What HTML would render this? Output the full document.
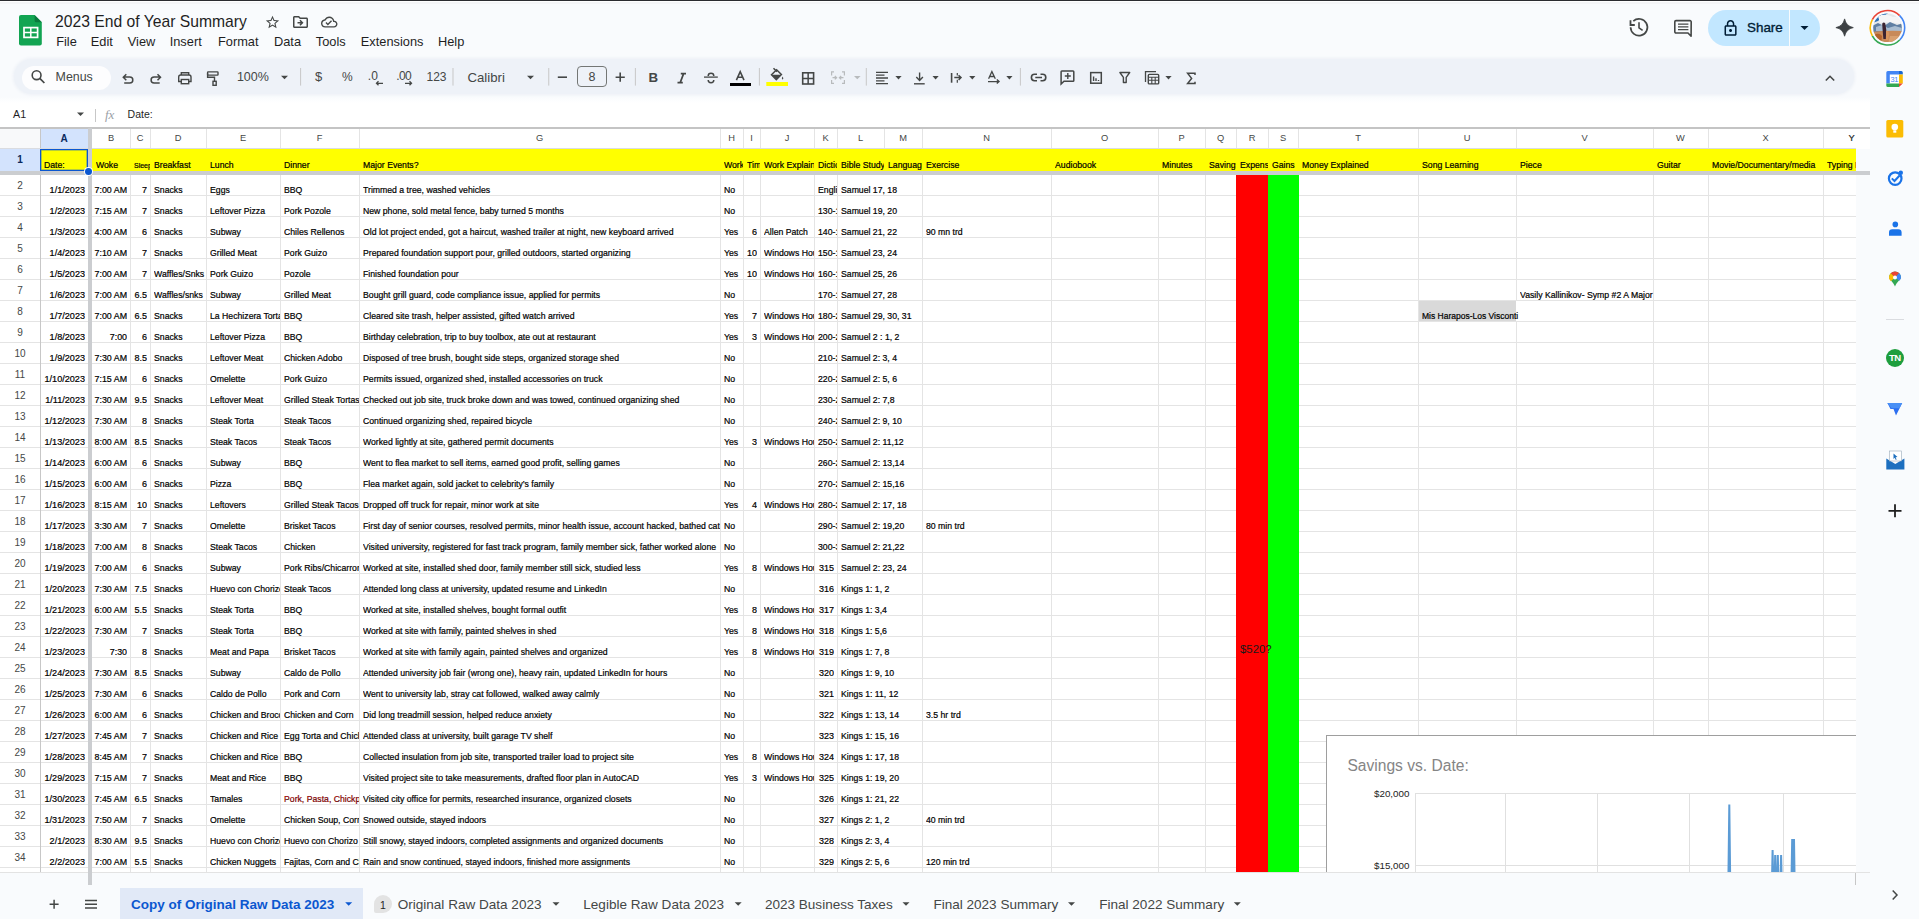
<!DOCTYPE html><html><head><meta charset="utf-8"><style>
*{box-sizing:border-box;margin:0;padding:0}
html,body{width:1919px;height:919px;overflow:hidden;background:#f9fbfd;font-family:"Liberation Sans",sans-serif;color:#1f1f1f}
.a{position:absolute}
.t{position:absolute;white-space:nowrap;overflow:hidden;font-size:8.7px;line-height:11px;color:#000;-webkit-text-stroke:0.2px #000}
.gl{position:absolute;background:#e4e4e4}
.ch{position:absolute;top:128px;height:21px;font-size:9.3px;line-height:21px;text-align:center;color:#444746}
.rh{position:absolute;left:0;width:40px;font-size:10px;text-align:center;color:#444746}
svg{position:absolute;overflow:visible}
</style></head><body>
<div class="a" style="left:0.0px;top:0.0px;width:1919.0px;height:1.0px;background:#2b2c30"></div>
<div class="a" style="left:0.0px;top:1.0px;width:1919.0px;height:1.0px;background:#ffffff"></div>
<div class="a" style="left:0.0px;top:2.0px;width:1919.0px;height:2.0px;background:#f4f5f7"></div>
<div class="a" style="left:55.0px;top:12.73px;font-size:15.70px;line-height:18.05px;color:#1f1f1f;font-weight:normal;white-space:nowrap;">2023 End of Year Summary</div>
<div class="a" style="left:56.2px;top:34.60px;font-size:12.80px;line-height:14.72px;color:#1f1f1f;font-weight:normal;white-space:nowrap;">File</div>
<div class="a" style="left:90.8px;top:34.60px;font-size:12.80px;line-height:14.72px;color:#1f1f1f;font-weight:normal;white-space:nowrap;">Edit</div>
<div class="a" style="left:127.8px;top:34.60px;font-size:12.80px;line-height:14.72px;color:#1f1f1f;font-weight:normal;white-space:nowrap;">View</div>
<div class="a" style="left:169.7px;top:34.60px;font-size:12.80px;line-height:14.72px;color:#1f1f1f;font-weight:normal;white-space:nowrap;">Insert</div>
<div class="a" style="left:218.0px;top:34.60px;font-size:12.80px;line-height:14.72px;color:#1f1f1f;font-weight:normal;white-space:nowrap;">Format</div>
<div class="a" style="left:274.0px;top:34.60px;font-size:12.80px;line-height:14.72px;color:#1f1f1f;font-weight:normal;white-space:nowrap;">Data</div>
<div class="a" style="left:315.8px;top:34.60px;font-size:12.80px;line-height:14.72px;color:#1f1f1f;font-weight:normal;white-space:nowrap;">Tools</div>
<div class="a" style="left:360.8px;top:34.60px;font-size:12.80px;line-height:14.72px;color:#1f1f1f;font-weight:normal;white-space:nowrap;">Extensions</div>
<div class="a" style="left:438.0px;top:34.60px;font-size:12.80px;line-height:14.72px;color:#1f1f1f;font-weight:normal;white-space:nowrap;">Help</div>
<div class="a" style="left:14.0px;top:59.0px;width:1840.0px;height:35.0px;border-radius:17.5px;background:#eef2f8;box-shadow:0 0 2.5px 1.5px #f0f3f8"></div>
<div class="a" style="left:22.0px;top:65.5px;width:89.0px;height:24.0px;border-radius:12px;background:#fdfdfe"></div>
<div class="a" style="left:55.6px;top:69.57px;font-size:12.40px;line-height:14.26px;color:#444746;font-weight:normal;white-space:nowrap;">Menus</div>
<div class="a" style="left:236.9px;top:70.38px;font-size:12.50px;line-height:14.37px;color:#444746;font-weight:normal;white-space:nowrap;">100%</div>
<div class="a" style="left:467.5px;top:69.74px;font-size:13.20px;line-height:15.18px;color:#444746;font-weight:normal;white-space:nowrap;">Calibri</div>
<div class="a" style="left:577.0px;top:66.0px;width:29.5px;height:21.0px;box-sizing:border-box;border:1px solid #747775;border-radius:4px"></div>
<div class="a" style="left:588.5px;top:69.98px;font-size:12.50px;line-height:14.37px;color:#444746;font-weight:normal;white-space:nowrap;">8</div>
<div class="a" style="left:315.0px;top:69.92px;font-size:13.00px;line-height:14.95px;color:#444746;font-weight:normal;white-space:nowrap;">$</div>
<div class="a" style="left:342.0px;top:70.84px;font-size:12.00px;line-height:13.80px;color:#444746;font-weight:normal;white-space:nowrap;">%</div>
<div class="a" style="left:426.5px;top:70.84px;font-size:12.00px;line-height:13.80px;color:#444746;font-weight:normal;white-space:nowrap;">123</div>
<div class="a" style="left:648.5px;top:70.34px;font-size:13.30px;line-height:15.29px;color:#444746;font-weight:bold;white-space:nowrap;">B</div>
<div class="a" style="left:0.0px;top:97.0px;width:1870.0px;height:31.0px;background:linear-gradient(#f9fbfd 0px,#fdfeff 4px,#ffffff 6px)"></div>
<div class="a" style="left:13.0px;top:107.84px;font-size:10.70px;line-height:12.30px;color:#1f1f1f;font-weight:normal;white-space:nowrap;">A1</div>
<div class="a" style="left:127.6px;top:108.02px;font-size:10.50px;line-height:12.07px;color:#1f1f1f;font-weight:normal;white-space:nowrap;">Date:</div>
<div class="a" style="left:95.0px;top:108.5px;width:1.0px;height:13.0px;background:#c7c7c7"></div>
<div class="a" style="left:1707.7px;top:9.7px;width:112.0px;height:36.0px;border-radius:18px;background:#c2e7ff"></div>
<div class="a" style="left:1789.0px;top:9.7px;width:1.0px;height:36.0px;background:#f9fbfd"></div>
<div class="a" style="left:1747.0px;top:20.35px;font-size:13.40px;line-height:15.41px;color:#001d35;font-weight:normal;white-space:nowrap;-webkit-text-stroke:0.35px #001d35">Share</div>
<div class="a" style="left:0;top:0;width:1856px;height:872px;overflow:hidden">
<div class="a" style="left:0;top:128px;width:1856px;height:744px;background:#fff"></div>
<div class="a" style="left:0;top:128px;width:1870px;height:21px;background:#fff"></div>
<div class="a" style="left:0;top:128px;width:40px;height:21px;background:#f8f9fa"></div>
<div class="a" style="left:0;top:149px;width:40px;height:723px;background:#fff"></div>
<div class="a" style="left:40px;top:149px;width:1816px;height:21px;background:#ffff00"></div>
<div class="a" style="left:40px;top:128px;width:48px;height:21px;background:#d3e3fd"></div>
<div class="a" style="left:0;top:149px;width:40px;height:22px;background:#d3e3fd"></div>
<div class="a" style="left:1236px;top:175px;width:32px;height:697px;background:#ff0000"></div>
<div class="a" style="left:1268px;top:175px;width:31px;height:697px;background:#00ff00"></div>
<div class="a" style="left:1418px;top:301px;width:98px;height:21px;background:#d9d9d9"></div>
<div class="gl" style="left:0;top:195px;width:1856px;height:1px"></div>
<div class="gl" style="left:0;top:216px;width:1856px;height:1px"></div>
<div class="gl" style="left:0;top:237px;width:1856px;height:1px"></div>
<div class="gl" style="left:0;top:258px;width:1856px;height:1px"></div>
<div class="gl" style="left:0;top:279px;width:1856px;height:1px"></div>
<div class="gl" style="left:0;top:300px;width:1856px;height:1px"></div>
<div class="gl" style="left:0;top:321px;width:1856px;height:1px"></div>
<div class="gl" style="left:0;top:342px;width:1856px;height:1px"></div>
<div class="gl" style="left:0;top:363px;width:1856px;height:1px"></div>
<div class="gl" style="left:0;top:384px;width:1856px;height:1px"></div>
<div class="gl" style="left:0;top:405px;width:1856px;height:1px"></div>
<div class="gl" style="left:0;top:426px;width:1856px;height:1px"></div>
<div class="gl" style="left:0;top:447px;width:1856px;height:1px"></div>
<div class="gl" style="left:0;top:468px;width:1856px;height:1px"></div>
<div class="gl" style="left:0;top:489px;width:1856px;height:1px"></div>
<div class="gl" style="left:0;top:510px;width:1856px;height:1px"></div>
<div class="gl" style="left:0;top:531px;width:1856px;height:1px"></div>
<div class="gl" style="left:0;top:552px;width:1856px;height:1px"></div>
<div class="gl" style="left:0;top:573px;width:1856px;height:1px"></div>
<div class="gl" style="left:0;top:594px;width:1856px;height:1px"></div>
<div class="gl" style="left:0;top:615px;width:1856px;height:1px"></div>
<div class="gl" style="left:0;top:636px;width:1856px;height:1px"></div>
<div class="gl" style="left:0;top:657px;width:1856px;height:1px"></div>
<div class="gl" style="left:0;top:678px;width:1856px;height:1px"></div>
<div class="gl" style="left:0;top:699px;width:1856px;height:1px"></div>
<div class="gl" style="left:0;top:720px;width:1856px;height:1px"></div>
<div class="gl" style="left:0;top:741px;width:1856px;height:1px"></div>
<div class="gl" style="left:0;top:762px;width:1856px;height:1px"></div>
<div class="gl" style="left:0;top:783px;width:1856px;height:1px"></div>
<div class="gl" style="left:0;top:804px;width:1856px;height:1px"></div>
<div class="gl" style="left:0;top:825px;width:1856px;height:1px"></div>
<div class="gl" style="left:0;top:846px;width:1856px;height:1px"></div>
<div class="gl" style="left:0;top:867px;width:1856px;height:1px"></div>
<div class="gl" style="left:88px;top:128px;width:1px;height:744px"></div>
<div class="gl" style="left:130px;top:128px;width:1px;height:744px"></div>
<div class="gl" style="left:150px;top:128px;width:1px;height:744px"></div>
<div class="gl" style="left:206px;top:128px;width:1px;height:744px"></div>
<div class="gl" style="left:280px;top:128px;width:1px;height:744px"></div>
<div class="gl" style="left:359px;top:128px;width:1px;height:744px"></div>
<div class="gl" style="left:720px;top:128px;width:1px;height:744px"></div>
<div class="gl" style="left:743px;top:128px;width:1px;height:744px"></div>
<div class="gl" style="left:760px;top:128px;width:1px;height:744px"></div>
<div class="gl" style="left:814px;top:128px;width:1px;height:744px"></div>
<div class="gl" style="left:837px;top:128px;width:1px;height:744px"></div>
<div class="gl" style="left:884px;top:128px;width:1px;height:47px"></div>
<div class="gl" style="left:922px;top:128px;width:1px;height:744px"></div>
<div class="gl" style="left:1051px;top:128px;width:1px;height:744px"></div>
<div class="gl" style="left:1158px;top:128px;width:1px;height:744px"></div>
<div class="gl" style="left:1205px;top:128px;width:1px;height:744px"></div>
<div class="gl" style="left:1236px;top:128px;width:1px;height:744px"></div>
<div class="gl" style="left:1268px;top:128px;width:1px;height:744px"></div>
<div class="gl" style="left:1298px;top:128px;width:1px;height:744px"></div>
<div class="gl" style="left:1418px;top:128px;width:1px;height:744px"></div>
<div class="gl" style="left:1516px;top:128px;width:1px;height:744px"></div>
<div class="gl" style="left:1653px;top:128px;width:1px;height:744px"></div>
<div class="gl" style="left:1708px;top:128px;width:1px;height:744px"></div>
<div class="gl" style="left:1823px;top:128px;width:1px;height:744px"></div>
<div class="gl" style="left:40px;top:128px;width:1px;height:744px;background:#c7c7c7"></div>
<div class="gl" style="left:0;top:148px;width:1856px;height:1px;background:#dadce0"></div>
<div class="a" style="left:0;top:127px;width:1870px;height:1.5px;background:#c4c4c4"></div>
<div class="a" style="left:41px;top:149px;width:1815px;height:22px;background:#ffff00"></div>
<div class="a" style="left:1236px;top:175px;width:32px;height:697px;background:#ff0000"></div>
<div class="a" style="left:1268px;top:175px;width:31px;height:697px;background:#00ff00"></div>
<div class="a" style="left:40px;top:149px;width:48px;height:22px;box-sizing:border-box;border:1px solid #0b57d0;box-shadow:inset 0 0 0 0.6px rgba(11,87,208,0.6)"></div>
<div class="a" style="left:88px;top:128px;width:4px;height:757px;background:#cbcdd0"></div>
<div class="a" style="left:0;top:171px;width:1870px;height:4px;background:#cbcdd0"></div>
<div class="a" style="left:85px;top:167.5px;width:7px;height:7px;border-radius:50%;background:#0b57d0;box-shadow:0 0 0 1px #fff"></div>
<div class="ch" style="left:40px;width:48px;font-weight:bold;color:#0a2a5e;font-size:10px">A</div>
<div class="ch" style="left:92px;width:38px;">B</div>
<div class="ch" style="left:130px;width:20px;">C</div>
<div class="ch" style="left:150px;width:56px;">D</div>
<div class="ch" style="left:206px;width:74px;">E</div>
<div class="ch" style="left:280px;width:79px;">F</div>
<div class="ch" style="left:359px;width:361px;">G</div>
<div class="ch" style="left:720px;width:23px;">H</div>
<div class="ch" style="left:743px;width:17px;">I</div>
<div class="ch" style="left:760px;width:54px;">J</div>
<div class="ch" style="left:814px;width:23px;">K</div>
<div class="ch" style="left:837px;width:47px;">L</div>
<div class="ch" style="left:884px;width:38px;">M</div>
<div class="ch" style="left:922px;width:129px;">N</div>
<div class="ch" style="left:1051px;width:107px;">O</div>
<div class="ch" style="left:1158px;width:47px;">P</div>
<div class="ch" style="left:1205px;width:31px;">Q</div>
<div class="ch" style="left:1236px;width:32px;">R</div>
<div class="ch" style="left:1268px;width:30px;">S</div>
<div class="ch" style="left:1298px;width:120px;">T</div>
<div class="ch" style="left:1418px;width:98px;">U</div>
<div class="ch" style="left:1516px;width:137px;">V</div>
<div class="ch" style="left:1653px;width:55px;">W</div>
<div class="ch" style="left:1708px;width:115px;">X</div>
<div class="ch" style="left:1823px;width:57px;">Y</div>
<div class="rh" style="top:149px;height:21px;line-height:21px;font-weight:bold;color:#0a2a5e">1</div>
<div class="rh" style="top:175px;height:21px;line-height:21px">2</div>
<div class="rh" style="top:196px;height:21px;line-height:21px">3</div>
<div class="rh" style="top:217px;height:21px;line-height:21px">4</div>
<div class="rh" style="top:238px;height:21px;line-height:21px">5</div>
<div class="rh" style="top:259px;height:21px;line-height:21px">6</div>
<div class="rh" style="top:280px;height:21px;line-height:21px">7</div>
<div class="rh" style="top:301px;height:21px;line-height:21px">8</div>
<div class="rh" style="top:322px;height:21px;line-height:21px">9</div>
<div class="rh" style="top:343px;height:21px;line-height:21px">10</div>
<div class="rh" style="top:364px;height:21px;line-height:21px">11</div>
<div class="rh" style="top:385px;height:21px;line-height:21px">12</div>
<div class="rh" style="top:406px;height:21px;line-height:21px">13</div>
<div class="rh" style="top:427px;height:21px;line-height:21px">14</div>
<div class="rh" style="top:448px;height:21px;line-height:21px">15</div>
<div class="rh" style="top:469px;height:21px;line-height:21px">16</div>
<div class="rh" style="top:490px;height:21px;line-height:21px">17</div>
<div class="rh" style="top:511px;height:21px;line-height:21px">18</div>
<div class="rh" style="top:532px;height:21px;line-height:21px">19</div>
<div class="rh" style="top:553px;height:21px;line-height:21px">20</div>
<div class="rh" style="top:574px;height:21px;line-height:21px">21</div>
<div class="rh" style="top:595px;height:21px;line-height:21px">22</div>
<div class="rh" style="top:616px;height:21px;line-height:21px">23</div>
<div class="rh" style="top:637px;height:21px;line-height:21px">24</div>
<div class="rh" style="top:658px;height:21px;line-height:21px">25</div>
<div class="rh" style="top:679px;height:21px;line-height:21px">26</div>
<div class="rh" style="top:700px;height:21px;line-height:21px">27</div>
<div class="rh" style="top:721px;height:21px;line-height:21px">28</div>
<div class="rh" style="top:742px;height:21px;line-height:21px">29</div>
<div class="rh" style="top:763px;height:21px;line-height:21px">30</div>
<div class="rh" style="top:784px;height:21px;line-height:21px">31</div>
<div class="rh" style="top:805px;height:21px;line-height:21px">32</div>
<div class="rh" style="top:826px;height:21px;line-height:21px">33</div>
<div class="rh" style="top:847px;height:21px;line-height:21px">34</div>
<div class="rh" style="top:868px;height:21px;line-height:21px">35</div>
<div class="t" style="left:44px;top:160px;width:44px;text-align:left;">Date:</div>
<div class="t" style="left:96px;top:160px;width:34px;text-align:left;">Woke</div>
<div class="t" style="left:134px;top:160px;width:16px;text-align:left;font-size:7px;line-height:9px;margin-top:1px;">Sleep</div>
<div class="t" style="left:154px;top:160px;width:52px;text-align:left;">Breakfast</div>
<div class="t" style="left:210px;top:160px;width:70px;text-align:left;">Lunch</div>
<div class="t" style="left:284px;top:160px;width:75px;text-align:left;">Dinner</div>
<div class="t" style="left:363px;top:160px;width:357px;text-align:left;">Major Events?</div>
<div class="t" style="left:724px;top:160px;width:19px;text-align:left;">Work</div>
<div class="t" style="left:747px;top:160px;width:13px;text-align:left;">Time</div>
<div class="t" style="left:764px;top:160px;width:50px;text-align:left;">Work Explain</div>
<div class="t" style="left:818px;top:160px;width:19px;text-align:left;">Dictionary</div>
<div class="t" style="left:841px;top:160px;width:43px;text-align:left;">Bible Study</div>
<div class="t" style="left:888px;top:160px;width:34px;text-align:left;">Language</div>
<div class="t" style="left:926px;top:160px;width:125px;text-align:left;">Exercise</div>
<div class="t" style="left:1055px;top:160px;width:103px;text-align:left;">Audiobook</div>
<div class="t" style="left:1162px;top:160px;width:43px;text-align:left;">Minutes</div>
<div class="t" style="left:1209px;top:160px;width:27px;text-align:left;">Savings</div>
<div class="t" style="left:1240px;top:160px;width:28px;text-align:left;">Expenses</div>
<div class="t" style="left:1272px;top:160px;width:26px;text-align:left;">Gains</div>
<div class="t" style="left:1302px;top:160px;width:116px;text-align:left;">Money Explained</div>
<div class="t" style="left:1422px;top:160px;width:94px;text-align:left;">Song Learning</div>
<div class="t" style="left:1520px;top:160px;width:133px;text-align:left;">Piece</div>
<div class="t" style="left:1657px;top:160px;width:51px;text-align:left;">Guitar</div>
<div class="t" style="left:1712px;top:160px;width:111px;text-align:left;">Movie/Documentary/media</div>
<div class="t" style="left:1827px;top:160px;width:29px;text-align:left;">Typing Practice</div>
<div class="t" style="left:42px;top:185px;width:43px;text-align:right;font-size:9.1px;">1/1/2023</div>
<div class="t" style="left:94px;top:185px;width:33px;text-align:right;font-size:8.85px;">7:00 AM</div>
<div class="t" style="left:132px;top:185px;width:15px;text-align:right;font-size:9px;">7</div>
<div class="t" style="left:154px;top:185px;width:52px;text-align:left;">Snacks</div>
<div class="t" style="left:210px;top:185px;width:70px;text-align:left;">Eggs</div>
<div class="t" style="left:284px;top:185px;width:75px;text-align:left;">BBQ</div>
<div class="t" style="left:363px;top:185px;width:357px;text-align:left;">Trimmed a tree, washed vehicles</div>
<div class="t" style="left:724px;top:185px;width:90px;text-align:left;">No</div>
<div class="t" style="left:818px;top:185px;width:19px;text-align:left;">English</div>
<div class="a" style="left:884px;top:175px;width:1px;height:20px;background:#fff"></div>
<div class="t" style="left:841px;top:185px;width:395px;text-align:left;">Samuel 17, 18</div>
<div class="t" style="left:42px;top:206px;width:43px;text-align:right;font-size:9.1px;">1/2/2023</div>
<div class="t" style="left:94px;top:206px;width:33px;text-align:right;font-size:8.85px;">7:15 AM</div>
<div class="t" style="left:132px;top:206px;width:15px;text-align:right;font-size:9px;">7</div>
<div class="t" style="left:154px;top:206px;width:52px;text-align:left;">Snacks</div>
<div class="t" style="left:210px;top:206px;width:70px;text-align:left;">Leftover Pizza</div>
<div class="t" style="left:284px;top:206px;width:75px;text-align:left;">Pork Pozole</div>
<div class="t" style="left:363px;top:206px;width:357px;text-align:left;">New phone, sold metal fence, baby turned 5 months</div>
<div class="t" style="left:724px;top:206px;width:90px;text-align:left;">No</div>
<div class="t" style="left:818px;top:206px;width:19px;text-align:left;">130-140</div>
<div class="a" style="left:884px;top:196px;width:1px;height:20px;background:#fff"></div>
<div class="t" style="left:841px;top:206px;width:395px;text-align:left;">Samuel 19, 20</div>
<div class="t" style="left:42px;top:227px;width:43px;text-align:right;font-size:9.1px;">1/3/2023</div>
<div class="t" style="left:94px;top:227px;width:33px;text-align:right;font-size:8.85px;">4:00 AM</div>
<div class="t" style="left:132px;top:227px;width:15px;text-align:right;font-size:9px;">6</div>
<div class="t" style="left:154px;top:227px;width:52px;text-align:left;">Snacks</div>
<div class="t" style="left:210px;top:227px;width:70px;text-align:left;">Subway</div>
<div class="t" style="left:284px;top:227px;width:75px;text-align:left;">Chiles Rellenos</div>
<div class="t" style="left:363px;top:227px;width:357px;text-align:left;">Old lot project ended, got a haircut, washed trailer at night, new keyboard arrived</div>
<div class="t" style="left:724px;top:227px;width:19px;text-align:left;">Yes</div>
<div class="t" style="left:745px;top:227px;width:12px;text-align:right;font-size:9px;">6</div>
<div class="t" style="left:764px;top:227px;width:50px;text-align:left;">Allen Patch</div>
<div class="t" style="left:818px;top:227px;width:19px;text-align:left;">140-150</div>
<div class="a" style="left:884px;top:217px;width:1px;height:20px;background:#fff"></div>
<div class="t" style="left:841px;top:227px;width:81px;text-align:left;">Samuel 21, 22</div>
<div class="t" style="left:926px;top:227px;width:310px;text-align:left;">90 mn trd</div>
<div class="t" style="left:42px;top:248px;width:43px;text-align:right;font-size:9.1px;">1/4/2023</div>
<div class="t" style="left:94px;top:248px;width:33px;text-align:right;font-size:8.85px;">7:10 AM</div>
<div class="t" style="left:132px;top:248px;width:15px;text-align:right;font-size:9px;">7</div>
<div class="t" style="left:154px;top:248px;width:52px;text-align:left;">Snacks</div>
<div class="t" style="left:210px;top:248px;width:70px;text-align:left;">Grilled Meat</div>
<div class="t" style="left:284px;top:248px;width:75px;text-align:left;">Pork Guizo</div>
<div class="t" style="left:363px;top:248px;width:357px;text-align:left;">Prepared foundation support pour, grilled outdoors, started organizing</div>
<div class="t" style="left:724px;top:248px;width:19px;text-align:left;">Yes</div>
<div class="t" style="left:745px;top:248px;width:12px;text-align:right;font-size:9px;">10</div>
<div class="t" style="left:764px;top:248px;width:50px;text-align:left;">Windows Hours</div>
<div class="t" style="left:818px;top:248px;width:19px;text-align:left;">150-160</div>
<div class="a" style="left:884px;top:238px;width:1px;height:20px;background:#fff"></div>
<div class="t" style="left:841px;top:248px;width:395px;text-align:left;">Samuel 23, 24</div>
<div class="t" style="left:42px;top:269px;width:43px;text-align:right;font-size:9.1px;">1/5/2023</div>
<div class="t" style="left:94px;top:269px;width:33px;text-align:right;font-size:8.85px;">7:00 AM</div>
<div class="t" style="left:132px;top:269px;width:15px;text-align:right;font-size:9px;">7</div>
<div class="t" style="left:154px;top:269px;width:52px;text-align:left;">Waffles/Snks</div>
<div class="t" style="left:210px;top:269px;width:70px;text-align:left;">Pork Guizo</div>
<div class="t" style="left:284px;top:269px;width:75px;text-align:left;">Pozole</div>
<div class="t" style="left:363px;top:269px;width:357px;text-align:left;">Finished foundation pour</div>
<div class="t" style="left:724px;top:269px;width:19px;text-align:left;">Yes</div>
<div class="t" style="left:745px;top:269px;width:12px;text-align:right;font-size:9px;">10</div>
<div class="t" style="left:764px;top:269px;width:50px;text-align:left;">Windows Hours</div>
<div class="t" style="left:818px;top:269px;width:19px;text-align:left;">160-170</div>
<div class="a" style="left:884px;top:259px;width:1px;height:20px;background:#fff"></div>
<div class="t" style="left:841px;top:269px;width:395px;text-align:left;">Samuel 25, 26</div>
<div class="t" style="left:42px;top:290px;width:43px;text-align:right;font-size:9.1px;">1/6/2023</div>
<div class="t" style="left:94px;top:290px;width:33px;text-align:right;font-size:8.85px;">7:00 AM</div>
<div class="t" style="left:132px;top:290px;width:15px;text-align:right;font-size:9px;">6.5</div>
<div class="t" style="left:154px;top:290px;width:52px;text-align:left;">Waffles/snks</div>
<div class="t" style="left:210px;top:290px;width:70px;text-align:left;">Subway</div>
<div class="t" style="left:284px;top:290px;width:75px;text-align:left;">Grilled Meat</div>
<div class="t" style="left:363px;top:290px;width:357px;text-align:left;">Bought grill guard, code compliance issue, applied for permits</div>
<div class="t" style="left:724px;top:290px;width:90px;text-align:left;">No</div>
<div class="t" style="left:818px;top:290px;width:19px;text-align:left;">170-180</div>
<div class="a" style="left:884px;top:280px;width:1px;height:20px;background:#fff"></div>
<div class="t" style="left:841px;top:290px;width:395px;text-align:left;">Samuel 27, 28</div>
<div class="t" style="left:1520px;top:290px;width:336px;text-align:left;">Vasily Kallinikov- Symp #2 A Major</div>
<div class="t" style="left:42px;top:311px;width:43px;text-align:right;font-size:9.1px;">1/7/2023</div>
<div class="t" style="left:94px;top:311px;width:33px;text-align:right;font-size:8.85px;">7:00 AM</div>
<div class="t" style="left:132px;top:311px;width:15px;text-align:right;font-size:9px;">6.5</div>
<div class="t" style="left:154px;top:311px;width:52px;text-align:left;">Snacks</div>
<div class="t" style="left:210px;top:311px;width:70px;text-align:left;">La Hechizera Torta</div>
<div class="t" style="left:284px;top:311px;width:75px;text-align:left;">BBQ</div>
<div class="t" style="left:363px;top:311px;width:357px;text-align:left;">Cleared site trash, helper assisted, gifted watch arrived</div>
<div class="t" style="left:724px;top:311px;width:19px;text-align:left;">Yes</div>
<div class="t" style="left:745px;top:311px;width:12px;text-align:right;font-size:9px;">7</div>
<div class="t" style="left:764px;top:311px;width:50px;text-align:left;">Windows Hours</div>
<div class="t" style="left:818px;top:311px;width:19px;text-align:left;">180-200</div>
<div class="a" style="left:884px;top:301px;width:1px;height:20px;background:#fff"></div>
<div class="t" style="left:841px;top:311px;width:395px;text-align:left;">Samuel 29, 30, 31</div>
<div class="a" style="left:1516px;top:301px;width:1px;height:20px;background:#fff"></div>
<div class="t" style="left:1422px;top:311px;width:434px;text-align:left;font-size:8.5px;">Mis Harapos-Los Visconti</div>
<div class="t" style="left:42px;top:332px;width:43px;text-align:right;font-size:9.1px;">1/8/2023</div>
<div class="t" style="left:94px;top:332px;width:33px;text-align:right;font-size:8.85px;">7:00</div>
<div class="t" style="left:132px;top:332px;width:15px;text-align:right;font-size:9px;">6</div>
<div class="t" style="left:154px;top:332px;width:52px;text-align:left;">Snacks</div>
<div class="t" style="left:210px;top:332px;width:70px;text-align:left;">Leftover Pizza</div>
<div class="t" style="left:284px;top:332px;width:75px;text-align:left;">BBQ</div>
<div class="t" style="left:363px;top:332px;width:357px;text-align:left;">Birthday celebration, trip to buy toolbox, ate out at restaurant</div>
<div class="t" style="left:724px;top:332px;width:19px;text-align:left;">Yes</div>
<div class="t" style="left:745px;top:332px;width:12px;text-align:right;font-size:9px;">3</div>
<div class="t" style="left:764px;top:332px;width:50px;text-align:left;">Windows Hours</div>
<div class="t" style="left:818px;top:332px;width:19px;text-align:left;">200-210</div>
<div class="a" style="left:884px;top:322px;width:1px;height:20px;background:#fff"></div>
<div class="t" style="left:841px;top:332px;width:395px;text-align:left;">Samuel 2 : 1, 2</div>
<div class="t" style="left:42px;top:353px;width:43px;text-align:right;font-size:9.1px;">1/9/2023</div>
<div class="t" style="left:94px;top:353px;width:33px;text-align:right;font-size:8.85px;">7:30 AM</div>
<div class="t" style="left:132px;top:353px;width:15px;text-align:right;font-size:9px;">8.5</div>
<div class="t" style="left:154px;top:353px;width:52px;text-align:left;">Snacks</div>
<div class="t" style="left:210px;top:353px;width:70px;text-align:left;">Leftover Meat</div>
<div class="t" style="left:284px;top:353px;width:75px;text-align:left;">Chicken Adobo</div>
<div class="t" style="left:363px;top:353px;width:357px;text-align:left;">Disposed of tree brush, bought side steps, organized storage shed</div>
<div class="t" style="left:724px;top:353px;width:90px;text-align:left;">No</div>
<div class="t" style="left:818px;top:353px;width:19px;text-align:left;">210-220</div>
<div class="a" style="left:884px;top:343px;width:1px;height:20px;background:#fff"></div>
<div class="t" style="left:841px;top:353px;width:395px;text-align:left;">Samuel 2: 3, 4</div>
<div class="t" style="left:42px;top:374px;width:43px;text-align:right;font-size:9.1px;">1/10/2023</div>
<div class="t" style="left:94px;top:374px;width:33px;text-align:right;font-size:8.85px;">7:15 AM</div>
<div class="t" style="left:132px;top:374px;width:15px;text-align:right;font-size:9px;">6</div>
<div class="t" style="left:154px;top:374px;width:52px;text-align:left;">Snacks</div>
<div class="t" style="left:210px;top:374px;width:70px;text-align:left;">Omelette</div>
<div class="t" style="left:284px;top:374px;width:75px;text-align:left;">Pork Guizo</div>
<div class="t" style="left:363px;top:374px;width:357px;text-align:left;">Permits issued, organized shed, installed accessories on truck</div>
<div class="t" style="left:724px;top:374px;width:90px;text-align:left;">No</div>
<div class="t" style="left:818px;top:374px;width:19px;text-align:left;">220-230</div>
<div class="a" style="left:884px;top:364px;width:1px;height:20px;background:#fff"></div>
<div class="t" style="left:841px;top:374px;width:395px;text-align:left;">Samuel 2: 5, 6</div>
<div class="t" style="left:42px;top:395px;width:43px;text-align:right;font-size:9.1px;">1/11/2023</div>
<div class="t" style="left:94px;top:395px;width:33px;text-align:right;font-size:8.85px;">7:30 AM</div>
<div class="t" style="left:132px;top:395px;width:15px;text-align:right;font-size:9px;">9.5</div>
<div class="t" style="left:154px;top:395px;width:52px;text-align:left;">Snacks</div>
<div class="t" style="left:210px;top:395px;width:70px;text-align:left;">Leftover Meat</div>
<div class="t" style="left:284px;top:395px;width:75px;text-align:left;">Grilled Steak Tortas</div>
<div class="t" style="left:363px;top:395px;width:357px;text-align:left;">Checked out job site, truck broke down and was towed, continued organizing shed</div>
<div class="t" style="left:724px;top:395px;width:90px;text-align:left;">No</div>
<div class="t" style="left:818px;top:395px;width:19px;text-align:left;">230-240</div>
<div class="a" style="left:884px;top:385px;width:1px;height:20px;background:#fff"></div>
<div class="t" style="left:841px;top:395px;width:395px;text-align:left;">Samuel 2: 7,8</div>
<div class="t" style="left:42px;top:416px;width:43px;text-align:right;font-size:9.1px;">1/12/2023</div>
<div class="t" style="left:94px;top:416px;width:33px;text-align:right;font-size:8.85px;">7:30 AM</div>
<div class="t" style="left:132px;top:416px;width:15px;text-align:right;font-size:9px;">8</div>
<div class="t" style="left:154px;top:416px;width:52px;text-align:left;">Snacks</div>
<div class="t" style="left:210px;top:416px;width:70px;text-align:left;">Steak Torta</div>
<div class="t" style="left:284px;top:416px;width:75px;text-align:left;">Steak Tacos</div>
<div class="t" style="left:363px;top:416px;width:357px;text-align:left;">Continued organizing shed, repaired bicycle</div>
<div class="t" style="left:724px;top:416px;width:90px;text-align:left;">No</div>
<div class="t" style="left:818px;top:416px;width:19px;text-align:left;">240-250</div>
<div class="a" style="left:884px;top:406px;width:1px;height:20px;background:#fff"></div>
<div class="t" style="left:841px;top:416px;width:395px;text-align:left;">Samuel 2: 9, 10</div>
<div class="t" style="left:42px;top:437px;width:43px;text-align:right;font-size:9.1px;">1/13/2023</div>
<div class="t" style="left:94px;top:437px;width:33px;text-align:right;font-size:8.85px;">8:00 AM</div>
<div class="t" style="left:132px;top:437px;width:15px;text-align:right;font-size:9px;">8.5</div>
<div class="t" style="left:154px;top:437px;width:52px;text-align:left;">Snacks</div>
<div class="t" style="left:210px;top:437px;width:70px;text-align:left;">Steak Tacos</div>
<div class="t" style="left:284px;top:437px;width:75px;text-align:left;">Steak Tacos</div>
<div class="t" style="left:363px;top:437px;width:357px;text-align:left;">Worked lightly at site, gathered permit documents</div>
<div class="t" style="left:724px;top:437px;width:19px;text-align:left;">Yes</div>
<div class="t" style="left:745px;top:437px;width:12px;text-align:right;font-size:9px;">3</div>
<div class="t" style="left:764px;top:437px;width:50px;text-align:left;">Windows Hours</div>
<div class="t" style="left:818px;top:437px;width:19px;text-align:left;">250-260</div>
<div class="a" style="left:884px;top:427px;width:1px;height:20px;background:#fff"></div>
<div class="t" style="left:841px;top:437px;width:395px;text-align:left;">Samuel 2: 11,12</div>
<div class="t" style="left:42px;top:458px;width:43px;text-align:right;font-size:9.1px;">1/14/2023</div>
<div class="t" style="left:94px;top:458px;width:33px;text-align:right;font-size:8.85px;">6:00 AM</div>
<div class="t" style="left:132px;top:458px;width:15px;text-align:right;font-size:9px;">6</div>
<div class="t" style="left:154px;top:458px;width:52px;text-align:left;">Snacks</div>
<div class="t" style="left:210px;top:458px;width:70px;text-align:left;">Subway</div>
<div class="t" style="left:284px;top:458px;width:75px;text-align:left;">BBQ</div>
<div class="t" style="left:363px;top:458px;width:357px;text-align:left;">Went to flea market to sell items, earned good profit, selling games</div>
<div class="t" style="left:724px;top:458px;width:90px;text-align:left;">No</div>
<div class="t" style="left:818px;top:458px;width:19px;text-align:left;">260-270</div>
<div class="a" style="left:884px;top:448px;width:1px;height:20px;background:#fff"></div>
<div class="t" style="left:841px;top:458px;width:395px;text-align:left;">Samuel 2: 13,14</div>
<div class="t" style="left:42px;top:479px;width:43px;text-align:right;font-size:9.1px;">1/15/2023</div>
<div class="t" style="left:94px;top:479px;width:33px;text-align:right;font-size:8.85px;">6:00 AM</div>
<div class="t" style="left:132px;top:479px;width:15px;text-align:right;font-size:9px;">6</div>
<div class="t" style="left:154px;top:479px;width:52px;text-align:left;">Snacks</div>
<div class="t" style="left:210px;top:479px;width:70px;text-align:left;">Pizza</div>
<div class="t" style="left:284px;top:479px;width:75px;text-align:left;">BBQ</div>
<div class="t" style="left:363px;top:479px;width:357px;text-align:left;">Flea market again, sold jacket to celebrity’s family</div>
<div class="t" style="left:724px;top:479px;width:90px;text-align:left;">No</div>
<div class="t" style="left:818px;top:479px;width:19px;text-align:left;">270-280</div>
<div class="a" style="left:884px;top:469px;width:1px;height:20px;background:#fff"></div>
<div class="t" style="left:841px;top:479px;width:395px;text-align:left;">Samuel 2: 15,16</div>
<div class="t" style="left:42px;top:500px;width:43px;text-align:right;font-size:9.1px;">1/16/2023</div>
<div class="t" style="left:94px;top:500px;width:33px;text-align:right;font-size:8.85px;">8:15 AM</div>
<div class="t" style="left:132px;top:500px;width:15px;text-align:right;font-size:9px;">10</div>
<div class="t" style="left:154px;top:500px;width:52px;text-align:left;">Snacks</div>
<div class="t" style="left:210px;top:500px;width:70px;text-align:left;">Leftovers</div>
<div class="t" style="left:284px;top:500px;width:75px;text-align:left;">Grilled Steak Tacos</div>
<div class="t" style="left:363px;top:500px;width:357px;text-align:left;">Dropped off truck for repair, minor work at site</div>
<div class="t" style="left:724px;top:500px;width:19px;text-align:left;">Yes</div>
<div class="t" style="left:745px;top:500px;width:12px;text-align:right;font-size:9px;">4</div>
<div class="t" style="left:764px;top:500px;width:50px;text-align:left;">Windows Hours</div>
<div class="t" style="left:818px;top:500px;width:19px;text-align:left;">280-290</div>
<div class="a" style="left:884px;top:490px;width:1px;height:20px;background:#fff"></div>
<div class="t" style="left:841px;top:500px;width:395px;text-align:left;">Samuel 2: 17, 18</div>
<div class="t" style="left:42px;top:521px;width:43px;text-align:right;font-size:9.1px;">1/17/2023</div>
<div class="t" style="left:94px;top:521px;width:33px;text-align:right;font-size:8.85px;">3:30 AM</div>
<div class="t" style="left:132px;top:521px;width:15px;text-align:right;font-size:9px;">7</div>
<div class="t" style="left:154px;top:521px;width:52px;text-align:left;">Snacks</div>
<div class="t" style="left:210px;top:521px;width:70px;text-align:left;">Omelette</div>
<div class="t" style="left:284px;top:521px;width:75px;text-align:left;">Brisket Tacos</div>
<div class="t" style="left:363px;top:521px;width:357px;text-align:left;">First day of senior courses, resolved permits, minor health issue, account hacked, bathed cat</div>
<div class="t" style="left:724px;top:521px;width:90px;text-align:left;">No</div>
<div class="t" style="left:818px;top:521px;width:19px;text-align:left;">290-300</div>
<div class="a" style="left:884px;top:511px;width:1px;height:20px;background:#fff"></div>
<div class="t" style="left:841px;top:521px;width:81px;text-align:left;">Samuel 2: 19,20</div>
<div class="t" style="left:926px;top:521px;width:310px;text-align:left;">80 min trd</div>
<div class="t" style="left:42px;top:542px;width:43px;text-align:right;font-size:9.1px;">1/18/2023</div>
<div class="t" style="left:94px;top:542px;width:33px;text-align:right;font-size:8.85px;">7:00 AM</div>
<div class="t" style="left:132px;top:542px;width:15px;text-align:right;font-size:9px;">8</div>
<div class="t" style="left:154px;top:542px;width:52px;text-align:left;">Snacks</div>
<div class="t" style="left:210px;top:542px;width:70px;text-align:left;">Steak Tacos</div>
<div class="t" style="left:284px;top:542px;width:75px;text-align:left;">Chicken</div>
<div class="t" style="left:363px;top:542px;width:357px;text-align:left;">Visited university, registered for fast track program, family member sick, father worked alone</div>
<div class="t" style="left:724px;top:542px;width:90px;text-align:left;">No</div>
<div class="t" style="left:818px;top:542px;width:19px;text-align:left;">300-315</div>
<div class="a" style="left:884px;top:532px;width:1px;height:20px;background:#fff"></div>
<div class="t" style="left:841px;top:542px;width:395px;text-align:left;">Samuel 2: 21,22</div>
<div class="t" style="left:42px;top:563px;width:43px;text-align:right;font-size:9.1px;">1/19/2023</div>
<div class="t" style="left:94px;top:563px;width:33px;text-align:right;font-size:8.85px;">7:00 AM</div>
<div class="t" style="left:132px;top:563px;width:15px;text-align:right;font-size:9px;">6</div>
<div class="t" style="left:154px;top:563px;width:52px;text-align:left;">Snacks</div>
<div class="t" style="left:210px;top:563px;width:70px;text-align:left;">Subway</div>
<div class="t" style="left:284px;top:563px;width:75px;text-align:left;">Pork Ribs/Chicarron</div>
<div class="t" style="left:363px;top:563px;width:357px;text-align:left;">Worked at site, installed shed door, family member still sick, studied less</div>
<div class="t" style="left:724px;top:563px;width:19px;text-align:left;">Yes</div>
<div class="t" style="left:745px;top:563px;width:12px;text-align:right;font-size:9px;">8</div>
<div class="t" style="left:764px;top:563px;width:50px;text-align:left;">Windows Hours</div>
<div class="t" style="left:816px;top:563px;width:18px;text-align:right;font-size:9px;">315</div>
<div class="a" style="left:884px;top:553px;width:1px;height:20px;background:#fff"></div>
<div class="t" style="left:841px;top:563px;width:395px;text-align:left;">Samuel 2: 23, 24</div>
<div class="t" style="left:42px;top:584px;width:43px;text-align:right;font-size:9.1px;">1/20/2023</div>
<div class="t" style="left:94px;top:584px;width:33px;text-align:right;font-size:8.85px;">7:30 AM</div>
<div class="t" style="left:132px;top:584px;width:15px;text-align:right;font-size:9px;">7.5</div>
<div class="t" style="left:154px;top:584px;width:52px;text-align:left;">Snacks</div>
<div class="t" style="left:210px;top:584px;width:70px;text-align:left;">Huevo con Chorizo</div>
<div class="t" style="left:284px;top:584px;width:75px;text-align:left;">Steak Tacos</div>
<div class="t" style="left:363px;top:584px;width:357px;text-align:left;">Attended long class at university, updated resume and LinkedIn</div>
<div class="t" style="left:724px;top:584px;width:90px;text-align:left;">No</div>
<div class="t" style="left:816px;top:584px;width:18px;text-align:right;font-size:9px;">316</div>
<div class="a" style="left:884px;top:574px;width:1px;height:20px;background:#fff"></div>
<div class="t" style="left:841px;top:584px;width:395px;text-align:left;">Kings 1: 1, 2</div>
<div class="t" style="left:42px;top:605px;width:43px;text-align:right;font-size:9.1px;">1/21/2023</div>
<div class="t" style="left:94px;top:605px;width:33px;text-align:right;font-size:8.85px;">6:00 AM</div>
<div class="t" style="left:132px;top:605px;width:15px;text-align:right;font-size:9px;">5.5</div>
<div class="t" style="left:154px;top:605px;width:52px;text-align:left;">Snacks</div>
<div class="t" style="left:210px;top:605px;width:70px;text-align:left;">Steak Torta</div>
<div class="t" style="left:284px;top:605px;width:75px;text-align:left;">BBQ</div>
<div class="t" style="left:363px;top:605px;width:357px;text-align:left;">Worked at site, installed shelves, bought formal outfit</div>
<div class="t" style="left:724px;top:605px;width:19px;text-align:left;">Yes</div>
<div class="t" style="left:745px;top:605px;width:12px;text-align:right;font-size:9px;">8</div>
<div class="t" style="left:764px;top:605px;width:50px;text-align:left;">Windows Hours</div>
<div class="t" style="left:816px;top:605px;width:18px;text-align:right;font-size:9px;">317</div>
<div class="a" style="left:884px;top:595px;width:1px;height:20px;background:#fff"></div>
<div class="t" style="left:841px;top:605px;width:395px;text-align:left;">Kings 1: 3,4</div>
<div class="t" style="left:42px;top:626px;width:43px;text-align:right;font-size:9.1px;">1/22/2023</div>
<div class="t" style="left:94px;top:626px;width:33px;text-align:right;font-size:8.85px;">7:30 AM</div>
<div class="t" style="left:132px;top:626px;width:15px;text-align:right;font-size:9px;">7</div>
<div class="t" style="left:154px;top:626px;width:52px;text-align:left;">Snacks</div>
<div class="t" style="left:210px;top:626px;width:70px;text-align:left;">Steak Torta</div>
<div class="t" style="left:284px;top:626px;width:75px;text-align:left;">BBQ</div>
<div class="t" style="left:363px;top:626px;width:357px;text-align:left;">Worked at site with family, painted shelves in shed</div>
<div class="t" style="left:724px;top:626px;width:19px;text-align:left;">Yes</div>
<div class="t" style="left:745px;top:626px;width:12px;text-align:right;font-size:9px;">8</div>
<div class="t" style="left:764px;top:626px;width:50px;text-align:left;">Windows Hours</div>
<div class="t" style="left:816px;top:626px;width:18px;text-align:right;font-size:9px;">318</div>
<div class="a" style="left:884px;top:616px;width:1px;height:20px;background:#fff"></div>
<div class="t" style="left:841px;top:626px;width:395px;text-align:left;">Kings 1: 5,6</div>
<div class="t" style="left:42px;top:647px;width:43px;text-align:right;font-size:9.1px;">1/23/2023</div>
<div class="t" style="left:94px;top:647px;width:33px;text-align:right;font-size:8.85px;">7:30</div>
<div class="t" style="left:132px;top:647px;width:15px;text-align:right;font-size:9px;">8</div>
<div class="t" style="left:154px;top:647px;width:52px;text-align:left;">Snacks</div>
<div class="t" style="left:210px;top:647px;width:70px;text-align:left;">Meat and Papa</div>
<div class="t" style="left:284px;top:647px;width:75px;text-align:left;">Brisket Tacos</div>
<div class="t" style="left:363px;top:647px;width:357px;text-align:left;">Worked at site with family again, painted shelves and organized</div>
<div class="t" style="left:724px;top:647px;width:19px;text-align:left;">Yes</div>
<div class="t" style="left:745px;top:647px;width:12px;text-align:right;font-size:9px;">8</div>
<div class="t" style="left:764px;top:647px;width:50px;text-align:left;">Windows Hours</div>
<div class="t" style="left:816px;top:647px;width:18px;text-align:right;font-size:9px;">319</div>
<div class="a" style="left:884px;top:637px;width:1px;height:20px;background:#fff"></div>
<div class="t" style="left:841px;top:647px;width:395px;text-align:left;">Kings 1: 7, 8</div>
<div class="t" style="left:42px;top:668px;width:43px;text-align:right;font-size:9.1px;">1/24/2023</div>
<div class="t" style="left:94px;top:668px;width:33px;text-align:right;font-size:8.85px;">7:30 AM</div>
<div class="t" style="left:132px;top:668px;width:15px;text-align:right;font-size:9px;">8.5</div>
<div class="t" style="left:154px;top:668px;width:52px;text-align:left;">Snacks</div>
<div class="t" style="left:210px;top:668px;width:70px;text-align:left;">Subway</div>
<div class="t" style="left:284px;top:668px;width:75px;text-align:left;">Caldo de Pollo</div>
<div class="t" style="left:363px;top:668px;width:357px;text-align:left;">Attended university job fair (wrong one), heavy rain, updated LinkedIn for hours</div>
<div class="t" style="left:724px;top:668px;width:90px;text-align:left;">No</div>
<div class="t" style="left:816px;top:668px;width:18px;text-align:right;font-size:9px;">320</div>
<div class="a" style="left:884px;top:658px;width:1px;height:20px;background:#fff"></div>
<div class="t" style="left:841px;top:668px;width:395px;text-align:left;">Kings 1: 9, 10</div>
<div class="t" style="left:42px;top:689px;width:43px;text-align:right;font-size:9.1px;">1/25/2023</div>
<div class="t" style="left:94px;top:689px;width:33px;text-align:right;font-size:8.85px;">7:30 AM</div>
<div class="t" style="left:132px;top:689px;width:15px;text-align:right;font-size:9px;">6</div>
<div class="t" style="left:154px;top:689px;width:52px;text-align:left;">Snacks</div>
<div class="t" style="left:210px;top:689px;width:70px;text-align:left;">Caldo de Pollo</div>
<div class="t" style="left:284px;top:689px;width:75px;text-align:left;">Pork and Corn</div>
<div class="t" style="left:363px;top:689px;width:357px;text-align:left;">Went to university lab, stray cat followed, walked away calmly</div>
<div class="t" style="left:724px;top:689px;width:90px;text-align:left;">No</div>
<div class="t" style="left:816px;top:689px;width:18px;text-align:right;font-size:9px;">321</div>
<div class="a" style="left:884px;top:679px;width:1px;height:20px;background:#fff"></div>
<div class="t" style="left:841px;top:689px;width:395px;text-align:left;">Kings 1: 11, 12</div>
<div class="t" style="left:42px;top:710px;width:43px;text-align:right;font-size:9.1px;">1/26/2023</div>
<div class="t" style="left:94px;top:710px;width:33px;text-align:right;font-size:8.85px;">6:00 AM</div>
<div class="t" style="left:132px;top:710px;width:15px;text-align:right;font-size:9px;">6</div>
<div class="t" style="left:154px;top:710px;width:52px;text-align:left;">Snacks</div>
<div class="t" style="left:210px;top:710px;width:70px;text-align:left;">Chicken and Broccoli</div>
<div class="t" style="left:284px;top:710px;width:75px;text-align:left;">Chicken and Corn</div>
<div class="t" style="left:363px;top:710px;width:357px;text-align:left;">Did long treadmill session, helped reduce anxiety</div>
<div class="t" style="left:724px;top:710px;width:90px;text-align:left;">No</div>
<div class="t" style="left:816px;top:710px;width:18px;text-align:right;font-size:9px;">322</div>
<div class="a" style="left:884px;top:700px;width:1px;height:20px;background:#fff"></div>
<div class="t" style="left:841px;top:710px;width:81px;text-align:left;">Kings 1: 13, 14</div>
<div class="t" style="left:926px;top:710px;width:310px;text-align:left;">3.5 hr trd</div>
<div class="t" style="left:42px;top:731px;width:43px;text-align:right;font-size:9.1px;">1/27/2023</div>
<div class="t" style="left:94px;top:731px;width:33px;text-align:right;font-size:8.85px;">7:45 AM</div>
<div class="t" style="left:132px;top:731px;width:15px;text-align:right;font-size:9px;">7</div>
<div class="t" style="left:154px;top:731px;width:52px;text-align:left;">Snacks</div>
<div class="t" style="left:210px;top:731px;width:70px;text-align:left;">Chicken and Rice</div>
<div class="t" style="left:284px;top:731px;width:75px;text-align:left;">Egg Torta and Chicken</div>
<div class="t" style="left:363px;top:731px;width:357px;text-align:left;">Attended class at university, built garage TV shelf</div>
<div class="t" style="left:724px;top:731px;width:90px;text-align:left;">No</div>
<div class="t" style="left:816px;top:731px;width:18px;text-align:right;font-size:9px;">323</div>
<div class="a" style="left:884px;top:721px;width:1px;height:20px;background:#fff"></div>
<div class="t" style="left:841px;top:731px;width:395px;text-align:left;">Kings 1: 15, 16</div>
<div class="t" style="left:42px;top:752px;width:43px;text-align:right;font-size:9.1px;">1/28/2023</div>
<div class="t" style="left:94px;top:752px;width:33px;text-align:right;font-size:8.85px;">8:45 AM</div>
<div class="t" style="left:132px;top:752px;width:15px;text-align:right;font-size:9px;">7</div>
<div class="t" style="left:154px;top:752px;width:52px;text-align:left;">Snacks</div>
<div class="t" style="left:210px;top:752px;width:70px;text-align:left;">Chicken and Rice</div>
<div class="t" style="left:284px;top:752px;width:75px;text-align:left;">BBQ</div>
<div class="t" style="left:363px;top:752px;width:357px;text-align:left;">Collected insulation from job site, transported trailer load to project site</div>
<div class="t" style="left:724px;top:752px;width:19px;text-align:left;">Yes</div>
<div class="t" style="left:745px;top:752px;width:12px;text-align:right;font-size:9px;">8</div>
<div class="t" style="left:764px;top:752px;width:50px;text-align:left;">Windows Hours</div>
<div class="t" style="left:816px;top:752px;width:18px;text-align:right;font-size:9px;">324</div>
<div class="a" style="left:884px;top:742px;width:1px;height:20px;background:#fff"></div>
<div class="t" style="left:841px;top:752px;width:395px;text-align:left;">Kings 1: 17, 18</div>
<div class="t" style="left:42px;top:773px;width:43px;text-align:right;font-size:9.1px;">1/29/2023</div>
<div class="t" style="left:94px;top:773px;width:33px;text-align:right;font-size:8.85px;">7:15 AM</div>
<div class="t" style="left:132px;top:773px;width:15px;text-align:right;font-size:9px;">7</div>
<div class="t" style="left:154px;top:773px;width:52px;text-align:left;">Snacks</div>
<div class="t" style="left:210px;top:773px;width:70px;text-align:left;">Meat and Rice</div>
<div class="t" style="left:284px;top:773px;width:75px;text-align:left;">BBQ</div>
<div class="t" style="left:363px;top:773px;width:357px;text-align:left;">Visited project site to take measurements, drafted floor plan in AutoCAD</div>
<div class="t" style="left:724px;top:773px;width:19px;text-align:left;">Yes</div>
<div class="t" style="left:745px;top:773px;width:12px;text-align:right;font-size:9px;">3</div>
<div class="t" style="left:764px;top:773px;width:50px;text-align:left;">Windows Hours</div>
<div class="t" style="left:816px;top:773px;width:18px;text-align:right;font-size:9px;">325</div>
<div class="a" style="left:884px;top:763px;width:1px;height:20px;background:#fff"></div>
<div class="t" style="left:841px;top:773px;width:395px;text-align:left;">Kings 1: 19, 20</div>
<div class="t" style="left:42px;top:794px;width:43px;text-align:right;font-size:9.1px;">1/30/2023</div>
<div class="t" style="left:94px;top:794px;width:33px;text-align:right;font-size:8.85px;">7:45 AM</div>
<div class="t" style="left:132px;top:794px;width:15px;text-align:right;font-size:9px;">6.5</div>
<div class="t" style="left:154px;top:794px;width:52px;text-align:left;">Snacks</div>
<div class="t" style="left:210px;top:794px;width:70px;text-align:left;">Tamales</div>
<div class="t" style="left:284px;top:794px;width:75px;text-align:left;color:#cc0000;">Pork, Pasta, Chickpeas</div>
<div class="t" style="left:363px;top:794px;width:357px;text-align:left;">Visited city office for permits, researched insurance, organized closets</div>
<div class="t" style="left:724px;top:794px;width:90px;text-align:left;">No</div>
<div class="t" style="left:816px;top:794px;width:18px;text-align:right;font-size:9px;">326</div>
<div class="a" style="left:884px;top:784px;width:1px;height:20px;background:#fff"></div>
<div class="t" style="left:841px;top:794px;width:395px;text-align:left;">Kings 1: 21, 22</div>
<div class="t" style="left:42px;top:815px;width:43px;text-align:right;font-size:9.1px;">1/31/2023</div>
<div class="t" style="left:94px;top:815px;width:33px;text-align:right;font-size:8.85px;">7:50 AM</div>
<div class="t" style="left:132px;top:815px;width:15px;text-align:right;font-size:9px;">7</div>
<div class="t" style="left:154px;top:815px;width:52px;text-align:left;">Snacks</div>
<div class="t" style="left:210px;top:815px;width:70px;text-align:left;">Omelette</div>
<div class="t" style="left:284px;top:815px;width:75px;text-align:left;">Chicken Soup, Corn, Rice</div>
<div class="t" style="left:363px;top:815px;width:357px;text-align:left;">Snowed outside, stayed indoors</div>
<div class="t" style="left:724px;top:815px;width:90px;text-align:left;">No</div>
<div class="t" style="left:816px;top:815px;width:18px;text-align:right;font-size:9px;">327</div>
<div class="a" style="left:884px;top:805px;width:1px;height:20px;background:#fff"></div>
<div class="t" style="left:841px;top:815px;width:81px;text-align:left;">Kings 2: 1, 2</div>
<div class="t" style="left:926px;top:815px;width:310px;text-align:left;">40 min trd</div>
<div class="t" style="left:42px;top:836px;width:43px;text-align:right;font-size:9.1px;">2/1/2023</div>
<div class="t" style="left:94px;top:836px;width:33px;text-align:right;font-size:8.85px;">8:30 AM</div>
<div class="t" style="left:132px;top:836px;width:15px;text-align:right;font-size:9px;">9.5</div>
<div class="t" style="left:154px;top:836px;width:52px;text-align:left;">Snacks</div>
<div class="t" style="left:210px;top:836px;width:70px;text-align:left;">Huevo con Chorizo</div>
<div class="t" style="left:284px;top:836px;width:75px;text-align:left;">Huevo con Chorizo</div>
<div class="t" style="left:363px;top:836px;width:357px;text-align:left;">Still snowy, stayed indoors, completed assignments and organized documents</div>
<div class="t" style="left:724px;top:836px;width:90px;text-align:left;">No</div>
<div class="t" style="left:816px;top:836px;width:18px;text-align:right;font-size:9px;">328</div>
<div class="a" style="left:884px;top:826px;width:1px;height:20px;background:#fff"></div>
<div class="t" style="left:841px;top:836px;width:395px;text-align:left;">Kings 2: 3, 4</div>
<div class="t" style="left:42px;top:857px;width:43px;text-align:right;font-size:9.1px;">2/2/2023</div>
<div class="t" style="left:94px;top:857px;width:33px;text-align:right;font-size:8.85px;">7:00 AM</div>
<div class="t" style="left:132px;top:857px;width:15px;text-align:right;font-size:9px;">5.5</div>
<div class="t" style="left:154px;top:857px;width:52px;text-align:left;">Snacks</div>
<div class="t" style="left:210px;top:857px;width:70px;text-align:left;">Chicken Nuggets</div>
<div class="t" style="left:284px;top:857px;width:75px;text-align:left;">Fajitas, Corn and Chicken</div>
<div class="t" style="left:363px;top:857px;width:357px;text-align:left;">Rain and snow continued, stayed indoors, finished more assignments</div>
<div class="t" style="left:724px;top:857px;width:90px;text-align:left;">No</div>
<div class="t" style="left:816px;top:857px;width:18px;text-align:right;font-size:9px;">329</div>
<div class="a" style="left:884px;top:847px;width:1px;height:20px;background:#fff"></div>
<div class="t" style="left:841px;top:857px;width:81px;text-align:left;">Kings 2: 5, 6</div>
<div class="t" style="left:926px;top:857px;width:310px;text-align:left;">120 min trd</div>
<div class="a" style="left:1240px;top:642px;font-size:11.4px;line-height:14px;color:#1a1a1a;white-space:nowrap">$520?</div>
<div class="a" style="left:1326.0px;top:735.0px;width:600.0px;height:200.0px;box-sizing:border-box;background:#fff;border:1px solid #9e9e9e"></div>
<div class="a" style="left:1347.4px;top:756.62px;font-size:15.60px;line-height:17.94px;color:#858585;font-weight:normal;white-space:nowrap;">Savings vs. Date:</div>
<div class="a" style="left:1374.0px;top:788.47px;font-size:9.80px;line-height:11.27px;color:#222;font-weight:normal;white-space:nowrap;">$20,000</div>
<div class="a" style="left:1374.0px;top:860.47px;font-size:9.80px;line-height:11.27px;color:#222;font-weight:normal;white-space:nowrap;">$15,000</div>
<div class="a" style="left:1415.0px;top:793.0px;width:455.0px;height:1.0px;background:#e0e0e0"></div>
<div class="a" style="left:1415.0px;top:865.0px;width:455.0px;height:1.0px;background:#e0e0e0"></div>
<div class="a" style="left:1415.0px;top:793.0px;width:1.0px;height:90.0px;background:#e0e0e0"></div>
<div class="a" style="left:1504.6px;top:793.0px;width:1.0px;height:90.0px;background:#e0e0e0"></div>
<div class="a" style="left:1597.4px;top:793.0px;width:1.0px;height:90.0px;background:#e0e0e0"></div>
<div class="a" style="left:1689.3px;top:793.0px;width:1.0px;height:90.0px;background:#e0e0e0"></div>
<div class="a" style="left:1783.3px;top:793.0px;width:1.0px;height:90.0px;background:#e0e0e0"></div>
<svg class="a" style="left:0;top:0" width="1919" height="919"><g stroke="#5b9bd5" stroke-width="2" fill="none">
<path d="M1728.4 880 L1729.3 804.6 L1730.2 880"/>
<path d="M1772 880 L1772.6 850 L1773.2 880 M1774.6 880 L1775.2 855 L1775.8 880 M1777.2 880 L1777.8 855 L1778.4 880 M1780.5 880 L1781.1 855 L1781.7 880"/>
<path d="M1791.5 880 L1792.2 839 L1793 880 M1793.5 880 L1794 839 L1794.6 880"/>
</g></svg>
</div>
<div class="a" style="left:0.0px;top:872.0px;width:1870.0px;height:13.0px;background:#f9fbfd"></div>
<div class="a" style="left:1856.0px;top:127.0px;width:14.0px;height:1.5px;background:#c4c4c4"></div>
<div class="a" style="left:1856.0px;top:128.5px;width:14.0px;height:744.0px;background:#f9fbfd"></div>
<div class="a" style="left:1856.0px;top:128.5px;width:14.0px;height:20.5px;background:#ffffff"></div>
<div class="a" style="left:1856.0px;top:171.0px;width:14.0px;height:4.0px;background:#cbcdd0"></div>
<div class="ch" style="left:1823px;width:57px;clip-path:inset(0 10px 0 0)">Y</div>
<div class="a" style="left:1855.0px;top:872.0px;width:1.0px;height:13.0px;background:#c7c7c7"></div>
<div class="a" style="left:0.0px;top:872.0px;width:1870.0px;height:1.0px;background:#e3e3e3"></div>
<div class="a" style="left:88.0px;top:872.0px;width:4.0px;height:13.0px;background:#cbcdd0"></div>
<div class="a" style="left:120.0px;top:888.0px;width:243.0px;height:31.0px;background:#e1e9f7"></div>
<div class="a" style="left:131.0px;top:896.86px;font-size:13.50px;line-height:15.52px;color:#0b57d0;font-weight:bold;white-space:nowrap;">Copy of Original Raw Data 2023</div>
<div class="a" style="left:374.0px;top:895.0px;width:18.0px;height:18.0px;border-radius:9px 9px 9px 2px;background:#e3e3e3"></div>
<div class="a" style="left:380.0px;top:898.82px;font-size:10.50px;line-height:12.07px;color:#1f1f1f;font-weight:normal;white-space:nowrap;">1</div>
<div class="a" style="left:397.7px;top:896.81px;font-size:13.55px;line-height:15.58px;color:#444746;font-weight:normal;white-space:nowrap;">Original Raw Data 2023</div>
<div class="a" style="left:583.3px;top:896.81px;font-size:13.55px;line-height:15.58px;color:#444746;font-weight:normal;white-space:nowrap;">Legible Raw Data 2023</div>
<div class="a" style="left:764.9px;top:896.81px;font-size:13.55px;line-height:15.58px;color:#444746;font-weight:normal;white-space:nowrap;">2023 Business Taxes</div>
<div class="a" style="left:933.4px;top:896.81px;font-size:13.55px;line-height:15.58px;color:#444746;font-weight:normal;white-space:nowrap;">Final 2023 Summary</div>
<div class="a" style="left:1099.2px;top:896.81px;font-size:13.55px;line-height:15.58px;color:#444746;font-weight:normal;white-space:nowrap;">Final 2022 Summary</div>
<div class="a" style="left:1885.8px;top:349.3px;width:18px;height:18px;border-radius:50%;background:#1e9e3e;color:#fff;font-size:9.6px;font-weight:bold;line-height:18px;text-align:center;letter-spacing:-0.6px">TN</div>
<div class="a" style="left:1886.0px;top:319.0px;width:18.0px;height:1.0px;background:#dadce0"></div>
<svg class="a" style="left:0;top:0;pointer-events:none" width="1919" height="919"><path d="M21 15 H34.6 L41.8 22.2 V43.5 a2 2 0 0 1 -2 2 H21 a2 2 0 0 1 -2 -2 V17 a2 2 0 0 1 2 -2z" fill="#12a452"/>
<path d="M34.6 15 L41.8 22.2 H36.1 a1.5 1.5 0 0 1 -1.5 -1.5z" fill="#0b7a3e"/>
<rect x="24" y="27.6" width="13.6" height="9.8" fill="none" stroke="#fff" stroke-width="1.7"/>
<path d="M24 32.5 H37.6 M30.8 27.6 V37.4" stroke="#fff" stroke-width="1.5"/>
<path transform="translate(264.50 14.30) scale(0.6667)" d="M22 9.24l-7.19-.62L12 2 9.19 8.63 2 9.24l5.46 4.73L5.82 21 12 17.27 18.18 21l-1.63-7.03L22 9.24zM12 15.4l-3.76 2.27 1-4.28-3.32-2.88 4.38-.38L12 6.1l1.71 4.04 4.38.38-3.32 2.88 1 4.28L12 15.4z" fill="#444746" />
<path transform="translate(291.50 13.00) scale(0.7500)" d="M20 6h-8l-2-2H4c-1.1 0-1.99.9-1.99 2L2 18c0 1.1.9 2 2 2h16c1.1 0 2-.9 2-2V8c0-1.1-.9-2-2-2zm0 12H4V6h5.17l2 2H20v10zm-7.84-6H8v2h4.16l-1.59 1.59L11.99 17 16 13.01 11.99 9l-1.41 1.41L12.16 12z" fill="#444746" />
<path transform="translate(321.00 13.75) scale(0.6875)" d="M19.35 10.04C18.67 6.59 15.64 4 12 4 9.11 4 6.6 5.64 5.35 8.04 2.34 8.36 0 10.91 0 14c0 3.31 2.69 6 6 6h13c2.76 0 5-2.24 5-5 0-2.64-2.05-4.78-4.65-4.96zM19 18H6c-2.21 0-4-1.79-4-4 0-2.05 1.53-3.76 3.56-3.97l1.07-.11.5-.95C8.08 7.14 9.94 6 12 6c2.62 0 4.88 1.86 5.39 4.43l.3 1.5 1.53.11c1.56.1 2.78 1.41 2.78 2.96 0 1.65-1.35 3-3 3zm-9-3.82l-2.09-2.09L6.5 13.5 10 17l6.01-6.01-1.41-1.41z" fill="#444746" />
<path d="M1630.6 27.3 A8.4 8.4 0 1 0 1633.3 21.1" fill="none" stroke="#444746" stroke-width="1.7"/>
<path d="M1630.5 20.2 V25 H1634.8" fill="none" stroke="#444746" stroke-width="1.8"/>
<path d="M1639 22.3 V27.8 L1642.6 30.4" fill="none" stroke="#444746" stroke-width="1.6"/>
<path d="M1691.1 36.3 L1688 33 H1676 a1.2 1.2 0 0 1 -1.2 -1.2 V21.8 a1.2 1.2 0 0 1 1.2 -1.2 H1690 a1.2 1.2 0 0 1 1.2 1.2z" fill="none" stroke="#444746" stroke-width="1.6" stroke-linejoin="round"/>
<path d="M1678 24.2 H1688.4 M1678 26.9 H1688.4 M1678 29.6 H1688.4" stroke="#444746" stroke-width="1.3"/>
<path transform="translate(1721.50 19.20) scale(0.7542)" d="M18 8h-1V6c0-2.76-2.24-5-5-5S7 3.24 7 6v2H6c-1.1 0-2 .9-2 2v10c0 1.1.9 2 2 2h12c1.1 0 2-.9 2-2V10c0-1.1-.9-2-2-2zM9 6c0-1.66 1.34-3 3-3s3 1.34 3 3v2H9V6zm9 14H6V10h12v10zm-6-3c1.1 0 2-.9 2-2s-.9-2-2-2-2 .9-2 2 .9 2 2 2z" fill="#001d35" />
<path d="M1800.5 26 h8 l-4 4z" fill="#001d35"/>
<path d="M1844.6 18.9 Q1846.1 26.1 1853.3 27.6 Q1846.1 29.1 1844.6 36.2 Q1843.1 29.1 1835.9 27.6 Q1843.1 26.1 1844.6 18.9z" fill="#3c4043" stroke="#3c4043" stroke-width="0.8" stroke-linejoin="round"/>
<path d="M1872.31 19.73 A17.2 17.2 0 0 1 1899.66 15.64" fill="none" stroke="#ea4335" stroke-width="1.6"/>
<path d="M1899.66 15.64 A17.2 17.2 0 0 1 1899.66 39.96" fill="none" stroke="#4285f4" stroke-width="1.6"/>
<path d="M1899.66 39.96 A17.2 17.2 0 0 1 1872.31 35.87" fill="none" stroke="#34a853" stroke-width="1.6"/>
<path d="M1872.31 35.87 A17.2 17.2 0 0 1 1872.31 19.73" fill="none" stroke="#fbbc04" stroke-width="1.6"/>
<clipPath id="av"><circle cx="1887.5" cy="27.8" r="14.3"/></clipPath>
<g clip-path="url(#av)"><rect x="1872" y="12" width="32" height="32" fill="#e4e7ea"/><path d="M1872 12 H1890 Q1884 15 1878 21 L1872 23z" fill="#2a6fb5"/><path d="M1878 16 Q1886 13 1893 17 Q1899 16 1902 21 L1900 24 Q1890 21 1880 23z" fill="#f4f5f6"/><path d="M1872 26 L1878 23 L1884 26 L1890 22 L1897 25 L1904 23 V33 H1872z" fill="#5f7fa3"/><path d="M1876 27 L1882 25 L1888 28 L1895 26 L1902 28 V31 H1876z" fill="#a9bdd1"/><path d="M1872 32 Q1886 30 1904 31 V44 H1872z" fill="#c88a5a"/><path d="M1874 35 Q1879 32 1882 36 L1881 44 H1873z" fill="#b4622a"/><path d="M1882.2 24 a1.6 1.6 0 0 1 3.2 0 L1886.3 30 L1885.8 39 H1883.4 L1882.6 30z" fill="#3a2330"/><path d="M1886 31 Q1888.5 30 1889 34 L1888.2 40 H1886z" fill="#d9965e"/><path d="M1890 36 H1904 V44 H1888z" fill="#d8a070"/></g>
<circle cx="36.6" cy="75.2" r="4.4" fill="none" stroke="#444746" stroke-width="1.6"/>
<path d="M39.8 78.4 L44.4 83" stroke="#444746" stroke-width="1.7"/>
<path d="M123.5 77 H129.8 a3 3 0 0 1 0 6 H124.2 M126.3 74.2 L123.3 77.2 L126.3 80.2" fill="none" stroke="#444746" stroke-width="1.5"/>
<path d="M160 77 H154.1 a3 3 0 0 0 0 6 H159.7 M157.5 74.2 L160.5 77.2 L157.5 80.2" fill="none" stroke="#444746" stroke-width="1.5"/>
<path d="M181.3 75 V72.7 H188.7 V75" fill="none" stroke="#444746" stroke-width="1.4"/>
<path d="M181 81.5 H178.7 V77 a2 2 0 0 1 2 -2 H189 a2 2 0 0 1 2 2 V81.5 H188.7" fill="none" stroke="#444746" stroke-width="1.4"/>
<rect x="181.3" y="79.5" width="7.4" height="4.2" fill="none" stroke="#444746" stroke-width="1.4"/>
<rect x="207.6" y="71.9" width="10.4" height="3.2" rx="0.5" fill="none" stroke="#444746" stroke-width="1.4"/>
<path d="M207.6 73.5 V77.3 H214.5 V81.3" fill="none" stroke="#444746" stroke-width="1.4"/>
<rect x="213" y="81.3" width="3.2" height="4" fill="none" stroke="#444746" stroke-width="1.4"/>
<path d="M281 75.7 h7 l-3.5 3.5z" fill="#444746"/>
<path d="M300.6 68 V85.6 M453 68 V85.6 M548.75 68 V85.6 M635.4 68 V85.6 M759.4 68 V85.6 M866.3 68 V85.6 M1020.4 68 V85.6" stroke="#c7c7c7" stroke-width="1"/>
<text x="367.8" y="79.5" font-size="12" font-family="Liberation Sans" fill="#444746">.0</text>
<path d="M383 83.3 H376.5 M378.5 81.3 L376.5 83.3 L378.5 85.3" fill="none" stroke="#444746" stroke-width="1.3"/>
<text x="396.3" y="79.5" font-size="12" font-family="Liberation Sans" fill="#444746" letter-spacing="-0.6">.00</text>
<path d="M405 83.3 H411.5 M409.5 81.3 L411.5 83.3 L409.5 85.3" fill="none" stroke="#444746" stroke-width="1.3"/>
<path d="M527 75.7 h7 l-3.5 3.5z" fill="#444746"/>
<path d="M557.8 77.2 H567" stroke="#444746" stroke-width="1.6"/>
<path d="M615.6 77.2 H624.8 M620.2 72.6 V81.8" stroke="#444746" stroke-width="1.6"/>
<path d="M680.8 73.6 H686 M683.6 73.6 L680.2 82.6 M677.5 82.6 H682.8" fill="none" stroke="#444746" stroke-width="1.7"/>
<path d="M704 77.1 H717.8" stroke="#444746" stroke-width="1.3"/>
<path d="M708.2 76 a2.8 2.7 0 0 1 5.6 0 M708.2 80 a2.8 2.7 0 0 0 5.6 0" fill="none" stroke="#444746" stroke-width="1.5"/>
<path d="M736.4 80.1 L740.2 71.6 L744 80.1 M737.8 77.2 H742.6" fill="none" stroke="#444746" stroke-width="1.6"/>
<rect x="730" y="83" width="21" height="3" fill="#000"/>
<path d="M773.5 68.2 L777 71.7 M771.5 74.8 L776.6 69.7 L781.4 74.6 L776.3 79.7z" fill="none" stroke="#444746" stroke-width="1.5"/>
<path d="M771.8 74.8 H781 L776.3 79.5z" fill="#444746"/>
<path d="M782.6 76.6 Q784.2 78.6 782.6 79.8 Q781 78.6 782.6 76.6z" fill="#444746"/>
<rect x="766.3" y="82" width="21.7" height="4" fill="#ffff00"/>
<rect x="802.7" y="72.8" width="10.9" height="11.2" fill="none" stroke="#444746" stroke-width="1.6"/>
<path d="M808.15 72.8 V84 M802.7 78.4 H813.6" stroke="#444746" stroke-width="1.5"/>
<path d="M834 71.9 H831.6 V75.5 M831.6 79.9 V83.4 H834 M842 71.9 H844.4 V75.5 M844.4 79.9 V83.4 H842 M832.5 77.7 H836.5 M834.8 76 L836.6 77.7 L834.8 79.4 M843.5 77.7 H839.5 M841.2 76 L839.4 77.7 L841.2 79.4" fill="none" stroke="#b8bbbd" stroke-width="1.2"/>
<path d="M854 76 h6.6 l-3.3 3.3z" fill="#b8bbbd"/>
<path d="M876 72.4 H888 M876 75.2 H884.5 M876 78 H888 M876 80.8 H884.5 M876 83.6 H888" stroke="#444746" stroke-width="1.3"/>
<path d="M895.4 76 h6.2 l-3.1 3.5z" fill="#444746"/>
<path d="M932.5 76 h6.2 l-3.1 3.5z" fill="#444746"/>
<path d="M969.2 76 h6.2 l-3.1 3.5z" fill="#444746"/>
<path d="M1006.3 76 h6.2 l-3.1 3.5z" fill="#444746"/>
<path d="M1165.4 76 h6.2 l-3.1 3.5z" fill="#444746"/>
<path d="M919.6 72.4 V80.2 M916.3 77 L919.6 80.4 L922.9 77" fill="none" stroke="#444746" stroke-width="1.4"/>
<path d="M914 83.8 H924.7" stroke="#444746" stroke-width="1.4"/>
<path d="M951.6 73 V82.7" stroke="#444746" stroke-width="1.6"/>
<path d="M957.3 73 V75.5 M957.3 79.7 V82.7" stroke="#444746" stroke-width="1.2"/>
<path d="M954.3 77.6 H961 M958.6 75.3 L961 77.6 L958.6 79.9" fill="none" stroke="#444746" stroke-width="1.5"/>
<path d="M988.6 78.8 L991.9 71.6 L995.3 78.8 M989.8 76.5 H994.1" fill="none" stroke="#444746" stroke-width="1.3"/>
<path d="M988 81.6 H999 M996.8 79.6 L999 81.6 L996.8 83.6" fill="none" stroke="#444746" stroke-width="1.4"/>
<path d="M1037 74.3 H1034.6 a3.2 3.2 0 0 0 0 6.4 H1037 M1040.5 74.3 H1042.6 a3.2 3.2 0 0 1 0 6.4 H1040.5 M1035.3 77.5 H1042" fill="none" stroke="#444746" stroke-width="1.6"/>
<path d="M1061.1 84 V71.8 a0.8 0.8 0 0 1 0.8 -0.8 H1073 a0.8 0.8 0 0 1 0.8 0.8 V80.4 a0.8 0.8 0 0 1 -0.8 0.8 H1064z" fill="none" stroke="#444746" stroke-width="1.5"/>
<path d="M1064.8 76 H1070.8 M1067.8 73 V79" stroke="#444746" stroke-width="1.4"/>
<rect x="1090.7" y="72.6" width="10.6" height="10.6" fill="none" stroke="#444746" stroke-width="1.5"/>
<path d="M1093.6 76.5 V81 M1096 78.2 V81 M1098.5 80 V81" stroke="#444746" stroke-width="1.4"/>
<path d="M1119.9 72.5 H1129.7 L1126.2 77.3 V82.5 H1123.4 V77.3z" fill="none" stroke="#444746" stroke-width="1.4" stroke-linejoin="round"/>
<path d="M1145.5 82 V71.6 H1156" fill="none" stroke="#444746" stroke-width="1.3"/>
<rect x="1148.3" y="74.4" width="10.4" height="9.5" rx="1" fill="none" stroke="#444746" stroke-width="1.4"/>
<path d="M1148.3 77.3 H1158.7 M1148.3 80.2 H1158.7 M1151.8 77.3 V83.9 M1155.2 77.3 V83.9" stroke="#444746" stroke-width="1.1"/>
<path d="M1195 75 V73.3 H1187.6 L1191.6 78.4 L1187.6 83.5 H1195 V81.8" fill="none" stroke="#444746" stroke-width="1.5"/>
<path d="M1825.8 80.5 L1830 76.3 L1834.2 80.5" fill="none" stroke="#444746" stroke-width="1.6"/>
<path d="M77 112.4 h7 l-3.5 3.5z" fill="#444746"/>
<text x="105" y="119" font-size="13" font-style="italic" font-family="Liberation Serif" fill="#9aa0a6">fx</text>
<path d="M49.6 904.3 H58.6 M54.1 899.8 V908.8" stroke="#444746" stroke-width="1.5"/>
<path d="M85 900.5 H97 M85 904.3 H97 M85 908.1 H97" stroke="#444746" stroke-width="1.5"/>
<path d="M345.2 902.3 h7 l-3.5 3.5z" fill="#0b57d0"/>
<path d="M552.5 902.3 h7 l-3.5 3.5z" fill="#444746"/>
<path d="M734.7 902.3 h7 l-3.5 3.5z" fill="#444746"/>
<path d="M902.5 902.3 h7 l-3.5 3.5z" fill="#444746"/>
<path d="M1068.0 902.3 h7 l-3.5 3.5z" fill="#444746"/>
<path d="M1233.8 902.3 h7 l-3.5 3.5z" fill="#444746"/>
<path d="M1892.7 890.5 L1897 895 L1892.7 899.5" fill="none" stroke="#444746" stroke-width="1.5"/>
<rect x="1886.3" y="70.9" width="16.5" height="16.1" rx="1.5" fill="#fff"/>
<path d="M1886.3 72.4 a1.5 1.5 0 0 1 1.5 -1.5 H1899 V74.5 H1889.8 V83.5 H1886.3z" fill="#4285f4"/>
<path d="M1899 70.9 H1901.3 a1.5 1.5 0 0 1 1.5 1.5 V74.5 H1899z" fill="#1967d2"/>
<path d="M1899 74.5 H1902.8 V83.5 H1899z" fill="#fbbc04"/>
<path d="M1889.8 83.5 H1899 V87 H1887.8 a1.5 1.5 0 0 1 -1.5 -1.5 V83.5z" fill="#34a853"/>
<path d="M1899 83.5 H1902.8 L1899 87z" fill="#ea4335"/>
<text x="1890.6" y="82.2" font-size="7.4" font-family="Liberation Sans" fill="#4285f4" letter-spacing="-0.4">31</text>
<rect x="1886.3" y="120" width="17" height="17.4" rx="1.5" fill="#fbbc04"/>
<circle cx="1894.8" cy="127" r="3.3" fill="#fff"/>
<rect x="1893.3" y="130.3" width="3" height="2.4" fill="#fff"/>
<circle cx="1895.2" cy="178.6" r="6.3" fill="none" stroke="#1a73e8" stroke-width="2.2"/>
<path d="M1891.8 178.4 L1894.5 181 L1899.6 175.5" fill="none" stroke="#1a73e8" stroke-width="2"/>
<circle cx="1900.8" cy="172.7" r="2.2" fill="#1a73e8"/>
<circle cx="1895.3" cy="224.4" r="2.8" fill="#1a73e8"/>
<path d="M1889 235.7 V232.5 a3.3 3.3 0 0 1 3.3 -3.3 H1898.3 a3.3 3.3 0 0 1 3.3 3.3 V235.7z" fill="#1a73e8"/>
<path d="M1895 286.6 C1893.5 282 1889 279.5 1889 277.5 a6 6 0 0 1 12 0 C1901 279.5 1896.5 282 1895 286.6z" fill="#34a853"/>
<path d="M1890.7 273.2 a6 6 0 0 1 8.5 -0.1 L1895 277.5z" fill="#ea4335"/>
<path d="M1889 277.5 a6 6 0 0 1 1.7 -4.3 L1895 277.5 L1890.8 281.2 C1889.8 280 1889 278.8 1889 277.5z" fill="#fbbc04"/>
<path d="M1899.2 273.1 a6 6 0 0 1 1.8 4.4 C1901 278.6 1900.3 279.7 1899.3 280.8 L1895 277.5z" fill="#4285f4"/>
<circle cx="1895" cy="277.5" r="2" fill="#fff"/>
<path d="M1887.4 403 H1902.2 L1896 415.4 L1893.5 409 H1890.5z" fill="#2d6ff0"/>
<path d="M1887.4 403 H1902.2 L1899.5 408.3 H1891.5z" fill="#4a90f5"/>
<path d="M1886.3 458.5 L1895.3 464 L1904.4 458.5 V469.4 H1886.3z" fill="#1d6fbf"/>
<rect x="1889.3" y="451" width="12" height="10" fill="#fff" stroke="#9ab" stroke-width="0.6"/>
<path d="M1893.5 453.5 L1897.5 457 L1895.6 457.3 L1896.6 459.5 L1895.8 459.9 L1894.8 457.7 L1893.5 459z" fill="#1d6fbf"/>
<path d="M1888.5 510.8 H1901.5 M1895 504.3 V517.3" stroke="#1f1f1f" stroke-width="1.8"/></svg>
</body></html>
